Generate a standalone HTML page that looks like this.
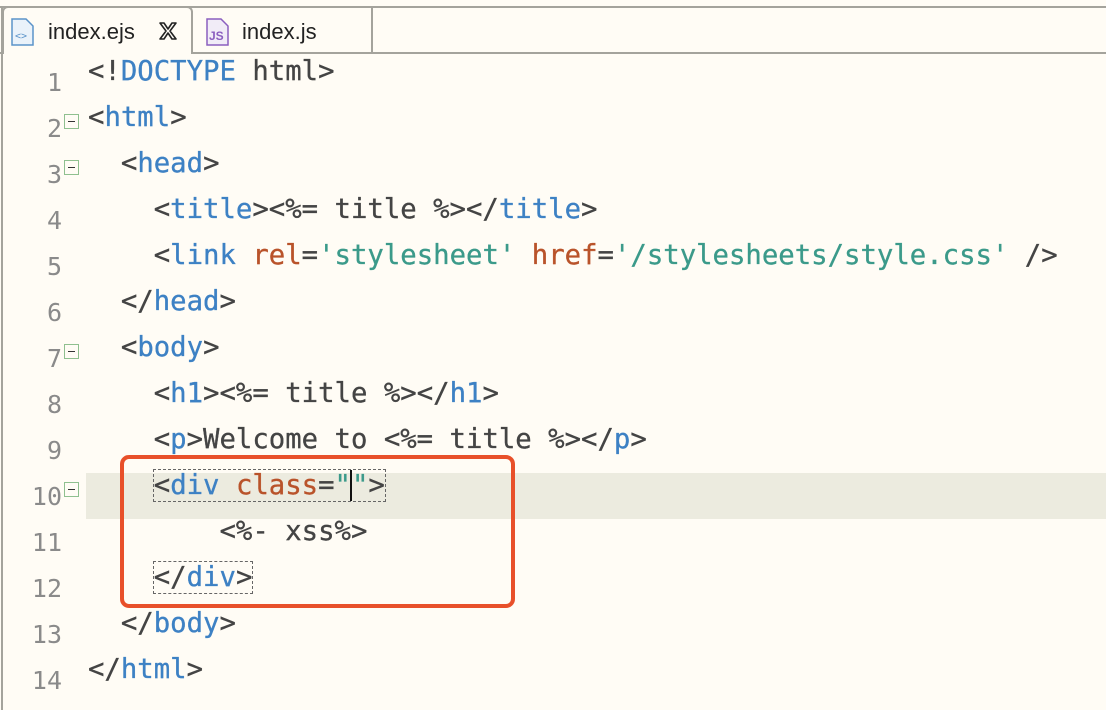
<!DOCTYPE html>
<html><head><style>
body{margin:0;width:1106px;height:710px;background:#fffcf5;overflow:hidden;position:relative;font-family:"DejaVu Sans Mono","Liberation Mono",monospace}
.tabbar{position:absolute;left:0;top:0;width:1106px;height:53px;background:#fffcf5}
.l1{position:absolute;left:0;top:6px;width:1106px;height:2px;background:#a4a39c}
.l2{position:absolute;left:0;top:52px;width:1106px;height:2px;background:#a4a39c}
.tab{position:absolute;top:8px;height:44px;font-family:"Liberation Sans",sans-serif;font-size:22px;color:#222;line-height:48px}
.lborder{position:absolute;left:1px;top:8px;width:2px;height:702px;background:#a4a39c}
.line{position:absolute;left:0;width:1106px;height:46px}
.num{position:absolute;right:1044px;top:1px;font-size:25px;color:#8a8a8a;line-height:46px;font-family:"DejaVu Sans Mono",monospace}
.code{position:absolute;left:88px;top:-10px;font-size:27.3px;line-height:46px;white-space:pre;color:#444;-webkit-text-stroke:0.3px}
.fold{position:absolute;left:64px;top:9px;width:15px;height:15px;border:1.5px solid #8fc08f;box-sizing:border-box}
.fold:after{content:"";position:absolute;left:2.5px;top:5.5px;width:7px;height:1.5px;background:#333}
.t{color:#3d81c4}.a{color:#b9532a}.s{color:#3b9a8a}
.dash{outline:1px dashed #666}
</style></head><body>
<div class="tabbar"></div>
<div class="l1"></div><div class="l2"></div>
<div style="position:absolute;left:2px;top:6px;width:191px;height:48px;background:#fffcf5;border:2px solid #a4a39c;border-bottom:none;border-radius:6px 6px 0 0;box-sizing:border-box"></div>
<div style="position:absolute;left:193px;top:8px;width:180px;height:44px;border-right:2px solid #a4a39c;box-sizing:border-box"></div>
<svg style="position:absolute;left:11px;top:18px" width="24" height="28"><path d="M1 1H15L22 8V27H1Z" fill="#eaf2fa" stroke="#5b93c9" stroke-width="1.5"/><text x="4" y="21" font-size="10" fill="#5b93c9" font-family="DejaVu Sans Mono">&lt;&gt;</text></svg>
<div class="tab" style="left:48px">index.ejs</div>
<svg style="position:absolute;left:158px;top:21px" width="20" height="20"><path d="M2 2L8 10L2 18H6L10 12L14 18H18L12 10L18 2H14L10 8L6 2Z" fill="none" stroke="#222" stroke-width="1.6" stroke-linejoin="round"/></svg>
<svg style="position:absolute;left:206px;top:18px" width="24" height="28"><path d="M1 1H15L22 8V27H1Z" fill="#f1ecf7" stroke="#8b5fbf" stroke-width="1.5"/><text x="3" y="22" font-size="12" fill="#8b5fbf" font-family="Liberation Sans" font-weight="bold">JS</text></svg>
<div class="tab" style="left:242px">index.js</div>
<div class="lborder"></div>
<div class="line" style="top:473px;left:86px;background:#ecebdf;width:1020px"></div>

<div class="line" style="top:59px"><span class="num">1</span><span class="code">&lt;!<span class="t">DOCTYPE</span> html&gt;</span></div>
<div class="line" style="top:105px"><span class="num">2</span><span class="fold"></span><span class="code">&lt;<span class="t">html</span>&gt;</span></div>
<div class="line" style="top:151px"><span class="num">3</span><span class="fold"></span><span class="code">  &lt;<span class="t">head</span>&gt;</span></div>
<div class="line" style="top:197px"><span class="num">4</span><span class="code">    &lt;<span class="t">title</span>&gt;&lt;%= title %&gt;&lt;/<span class="t">title</span>&gt;</span></div>
<div class="line" style="top:243px"><span class="num">5</span><span class="code">    &lt;<span class="t">link</span> <span class="a">rel</span>=<span class="s">'stylesheet'</span> <span class="a">href</span>=<span class="s">'/stylesheets/style.css'</span> /&gt;</span></div>
<div class="line" style="top:289px"><span class="num">6</span><span class="code">  &lt;/<span class="t">head</span>&gt;</span></div>
<div class="line" style="top:335px"><span class="num">7</span><span class="fold"></span><span class="code">  &lt;<span class="t">body</span>&gt;</span></div>
<div class="line" style="top:381px"><span class="num">8</span><span class="code">    &lt;<span class="t">h1</span>&gt;&lt;%= title %&gt;&lt;/<span class="t">h1</span>&gt;</span></div>
<div class="line" style="top:427px"><span class="num">9</span><span class="code">    &lt;<span class="t">p</span>&gt;Welcome to &lt;%= title %&gt;&lt;/<span class="t">p</span>&gt;</span></div>
<div class="line" style="top:473px"><span class="num">10</span><span class="fold"></span><span class="code">    <span class="dash">&lt;<span class="t">div</span> <span class="a">class</span>=<span class="s">"</span><span style="border-left:2px solid #111;margin-left:-1px"></span><span class="s">"</span>&gt;</span></span></div>
<div class="line" style="top:519px"><span class="num">11</span><span class="code">        &lt;%- xss%&gt;</span></div>
<div class="line" style="top:565px"><span class="num">12</span><span class="code">    <span class="dash">&lt;/<span class="t">div</span>&gt;</span></span></div>
<div class="line" style="top:611px"><span class="num">13</span><span class="code">  &lt;/<span class="t">body</span>&gt;</span></div>
<div class="line" style="top:657px"><span class="num">14</span><span class="code">&lt;/<span class="t">html</span>&gt;</span></div>

<div style="position:absolute;left:120px;top:455px;width:395px;height:153px;border:4px solid #e8502a;border-radius:9px;box-sizing:border-box"></div>
</body></html>
